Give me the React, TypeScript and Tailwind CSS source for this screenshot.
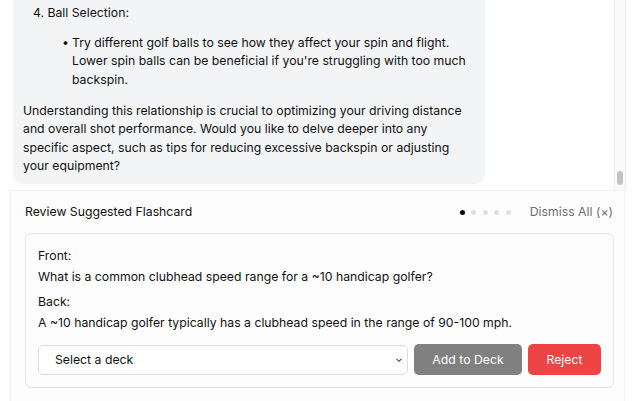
import React from "react";

export default function App() {
  const dots = [true, false, false, false, false];
  return (
    <div className="w-[640px] h-[401px] overflow-hidden bg-white text-[#111111] text-[12.25px]" style={{ fontFamily: "Inter, 'Noto Sans', sans-serif" }}>
      <div className="flex h-[190px] w-[626px]">
        <div className="flex-1 h-full overflow-hidden flex flex-col justify-end pb-[6px]">
          <div className="ml-[13px] w-[472px] bg-[#f3f4f6] rounded-[9px] px-[10px] pt-[20px] pb-[8.6px] leading-[18.4px]">
            <div className="pl-[10px]">4. Ball Selection:</div>
            <ul className="mt-[11.6px] pl-[39px]">
              <li className="flex">
                <span className="w-[10px] shrink-0">•</span>
                <span>
                  Try different golf balls to see how they affect your spin and flight. Lower spin balls can be beneficial if you're struggling with too much backspin.
                </span>
              </li>
            </ul>
            <p className="mt-[12.6px]">
              Understanding this relationship is crucial to optimizing your driving distance and overall shot performance. Would you like to delve deeper into any specific aspect, such as tips for reducing excessive backspin or adjusting your equipment?
            </p>
          </div>
        </div>
        <div className="w-[12px] h-full border-x border-[#ececec] bg-[#fafafa] flex flex-col justify-end items-center pb-[5px]">
          <div className="w-[6px] h-[14px] rounded-full bg-[#c2c2c2]" />
        </div>
      </div>
      <div className="ml-[10px] w-[615px] h-[211px] bg-[#fdfdfd] border-l border-r border-t border-[#f2f2f2] pl-[14px] pr-[11px] pt-[12px]">
        <div className="flex items-center justify-between h-[18px]">
          <span>Review Suggested Flashcard</span>
          <div className="flex items-center">
            <div className="flex items-center gap-[6.5px] mr-[19px]">
              {dots.map((d, i) => (
                <span key={i} className={d ? "w-[5px] h-[5px] rounded-full bg-black" : "w-[5px] h-[5px] rounded-full bg-[#dedede]"} />
              ))}
            </div>
            <span className="text-[#6f6f6f]">Dismiss All (×)</span>
          </div>
        </div>
        <div className="mt-[12px] w-[589px] border border-[#e2e2e2] rounded-[6px] px-[12px] pt-[13px] pb-[12px] leading-[18px]">
          <div>Front:</div>
          <div className="mt-[3px]">What is a common clubhead speed range for a ~10 handicap golfer?</div>
          <div className="mt-[7px]">Back:</div>
          <div className="mt-[3px]">A ~10 handicap golfer typically has a clubhead speed in the range of 90-100 mph.</div>
          <div className="mt-[12px] flex items-center gap-[6px]">
            <div className="flex-1 h-[30px] border border-[#dcdcdc] rounded-[5px] bg-white flex items-center justify-between pl-[16px] pr-[3px]">
              <span>Select a deck</span>
              <svg width="10" height="10" viewBox="0 0 10 10" fill="none">
                <path d="M2.5 3.8 L5 6.3 L7.5 3.8" stroke="#444" strokeWidth="1.1" />
              </svg>
            </div>
            <button className="w-[108px] h-[31px] rounded-[5px] bg-[#808080] text-white">Add to Deck</button>
            <button className="w-[73px] h-[31px] rounded-[5px] bg-[#ef4444] text-white">Reject</button>
          </div>
        </div>
      </div>
    </div>
  );
}
